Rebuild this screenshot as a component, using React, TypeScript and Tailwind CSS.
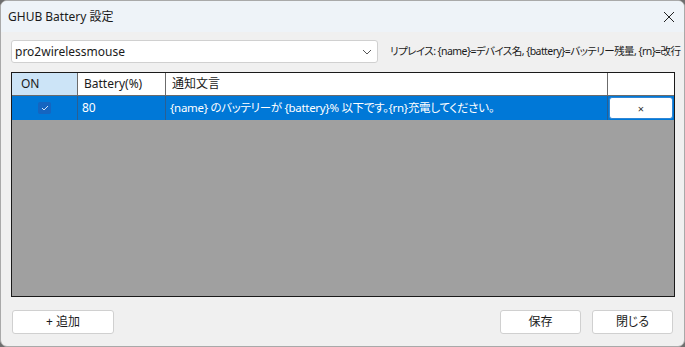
import React, { useState } from "react";

interface NoticeRow {
    on: boolean;
    battery: number;
    message: string;
}

const font = { fontFamily: '"Noto Sans", "Noto Sans CJK JP", sans-serif' };

const App = () => {
    const [rows] = useState<NoticeRow[]>([
        { on: true, battery: 80, message: "{name} のバッテリーが {battery}% 以下です。{rn}充電してください。" },
    ]);

    return (
        <div className="w-[685px] h-[347px] bg-[#6e6e6e] [font-feature-settings:'palt']" style={font}>
            <div className="w-full h-full flex flex-col bg-[#f0f0f0] rounded-[7px] border border-[#a9a9a9] overflow-hidden text-[12px] text-[#1b1b1b]">
                {/* title bar */}
                <div className="h-[31px] shrink-0 bg-[#eef3f8] flex items-center justify-between pl-[7px] pr-[8px]">
                    <span className="text-[12px] leading-none">GHUB Battery 設定</span>
                    <svg width="12" height="12" viewBox="0 0 12 12" className="mr-[1px]">
                        <path d="M1 1 L11 11 M11 1 L1 11" stroke="#222" strokeWidth="1" fill="none" />
                    </svg>
                </div>

                {/* device + hint */}
                <div className="flex items-center mt-[8px] pl-[10px] h-[23px] overflow-hidden">
                    <div className="w-[367px] h-[23px] shrink-0 bg-white border border-[#d0d0d0] rounded-[3px] flex items-center justify-between pl-[3px] pr-[5px]">
                        <span className="text-[12px]">pro2wirelessmouse</span>
                        <svg width="10" height="6" viewBox="0 0 10 6">
                            <path d="M1 1 L5 5 L9 1" stroke="#555" strokeWidth="1" fill="none" />
                        </svg>
                    </div>
                    <span className="ml-[12px] text-[10.5px] whitespace-nowrap tracking-[-0.55px]">
                        リプレイス: {"{name}"}=デバイス名, {"{battery}"}=バッテリー残量, {"{rn}"}=改行
                    </span>
                </div>

                {/* grid */}
                <div className="mt-[9px] mx-[10px] mr-[9px] h-[225px] border border-[#1a1a1a] bg-[#a0a0a0] flex flex-col">
                    <div className="flex h-[23px] bg-white border-b border-[#6b6b6b]">
                        <div className="w-[66px] bg-[#cce4f7] border-r border-[#6b6b6b] flex items-center pl-[9px]">ON</div>
                        <div className="w-[88px] border-r border-[#6b6b6b] flex items-center pl-[6px]">Battery(%)</div>
                        <div className="w-[442px] border-r border-[#6b6b6b] flex items-center pl-[6px]">通知文言</div>
                        <div className="flex-1"></div>
                    </div>
                    {rows.map((row, index) => (
                        <div className="flex h-[24px] bg-[#0078d7] text-white" key={index}>
                            <div className="w-[66px] border-r border-[#2a5f93] flex items-center justify-center">
                                <div className="w-[13px] h-[12px] rounded-[2px] bg-[#1565c0] flex items-center justify-center">
                                    <svg width="8" height="6" viewBox="0 0 8 6">
                                        <path d="M1 3 L3 5 L7 1" stroke="#cfe3f7" strokeWidth="1" fill="none" />
                                    </svg>
                                </div>
                            </div>
                            <div className="w-[88px] border-r border-[#2a5f93] flex items-center pl-[4px]">{row.battery}</div>
                            <div className="w-[442px] border-r border-[#2a5f93] flex items-center pl-[4px] whitespace-nowrap text-[11.5px] tracking-[-0.3px]">{row.message}</div>
                            <div className="flex-1 flex items-center pl-[1px] pr-[1px] py-[1px]">
                                <button className="w-full h-full bg-white border border-[#2e86d6] rounded-[3px] text-[#333] text-[11px] leading-none">×</button>
                            </div>
                        </div>
                    ))}
                </div>

                {/* buttons */}
                <div className="flex items-center mt-[13px] pl-[11px] pr-[11px]">
                    <button className="w-[102px] h-[24px] bg-white border border-[#d0d0d0] rounded-[3px] text-[12px]">+ 追加</button>
                    <div className="flex-1"></div>
                    <button className="w-[81px] h-[24px] bg-white border border-[#d0d0d0] rounded-[3px] text-[12px]">保存</button>
                    <button className="w-[81px] h-[24px] ml-[11px] bg-white border border-[#d0d0d0] rounded-[3px] text-[12px]">閉じる</button>
                </div>
            </div>
        </div>
    );
};

export default App;
